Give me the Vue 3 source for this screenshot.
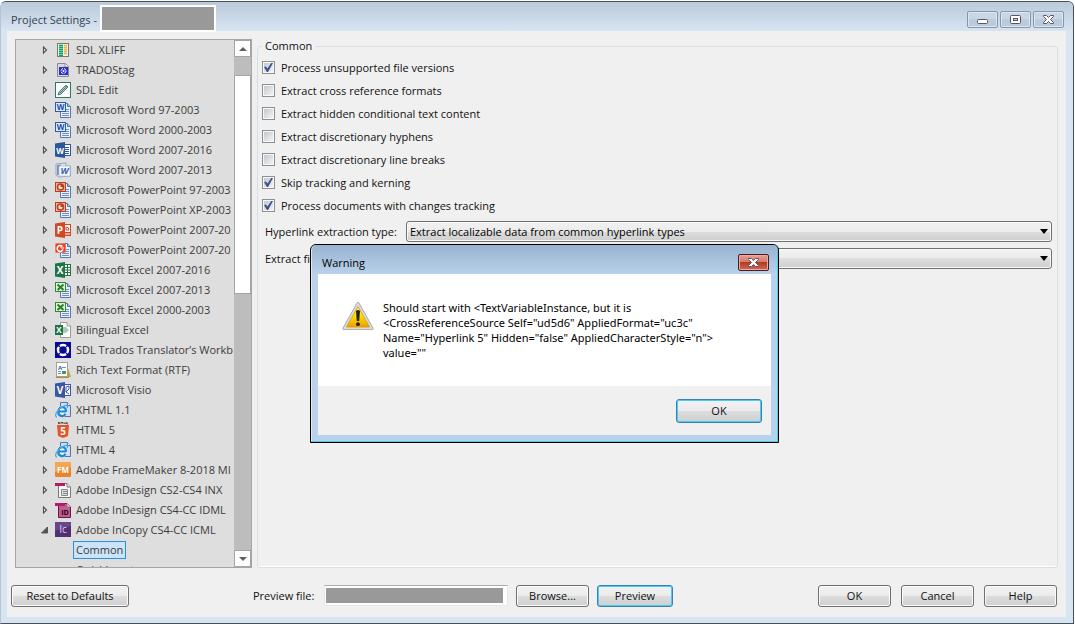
<script setup>
import { ref } from 'vue'

const formats = [
  { label: 'SDL XLIFF', icon: 'xliff' },
  { label: 'TRADOStag', icon: 'trados' },
  { label: 'SDL Edit', icon: 'edit' },
  { label: 'Microsoft Word 97-2003', icon: 'doc', kind: 'word' },
  { label: 'Microsoft Word 2000-2003', icon: 'doc', kind: 'word' },
  { label: 'Microsoft Word 2007-2016', icon: 'office', letter: 'W', color: '#2b579a' },
  { label: 'Microsoft Word 2007-2013', icon: 'word07' },
  { label: 'Microsoft PowerPoint 97-2003', icon: 'doc', kind: 'ppt' },
  { label: 'Microsoft PowerPoint XP-2003', icon: 'doc', kind: 'ppt' },
  { label: 'Microsoft PowerPoint 2007-20', icon: 'office', letter: 'P', color: '#d24726' },
  { label: 'Microsoft PowerPoint 2007-20', icon: 'doc', kind: 'ppt07' },
  { label: 'Microsoft Excel 2007-2016', icon: 'office', letter: 'X', color: '#217346' },
  { label: 'Microsoft Excel 2007-2013', icon: 'doc', kind: 'xls' },
  { label: 'Microsoft Excel 2000-2003', icon: 'doc', kind: 'xls' },
  { label: 'Bilingual Excel', icon: 'bilingual' },
  { label: 'SDL Trados Translator\u2019s Workb', icon: 'workbench' },
  { label: 'Rich Text Format (RTF)', icon: 'rtf' },
  { label: 'Microsoft Visio', icon: 'office', letter: 'V', color: '#3955a3' },
  { label: 'XHTML 1.1', icon: 'ie' },
  { label: 'HTML 5', icon: 'html5' },
  { label: 'HTML 4', icon: 'ie' },
  { label: 'Adobe FrameMaker 8-2018 MI', icon: 'fm' },
  { label: 'Adobe InDesign CS2-CS4 INX', icon: 'inx' },
  { label: 'Adobe InDesign CS4-CC IDML', icon: 'idml' },
  { label: 'Adobe InCopy CS4-CC ICML', icon: 'ic', open: true },
]

const options = ref([
  { label: 'Process unsupported file versions', on: true },
  { label: 'Extract cross reference formats', on: false },
  { label: 'Extract hidden conditional text content', on: false },
  { label: 'Extract discretionary hyphens', on: false },
  { label: 'Extract discretionary line breaks', on: false },
  { label: 'Skip tracking and kerning', on: true },
  { label: 'Process documents with changes tracking', on: true },
])
</script>

<template>
  <div class="page">
    <main class="window">
      <header class="titlebar">
        <h1>Project Settings -</h1>
        <span class="redacted"></span>
        <div class="controls">
          <button type="button" aria-label="Minimize">
            <svg width="13" height="11"><rect x="1.500" y="5.500" width="10" height="4" rx="1" fill="#fff" stroke="#535666" /></svg>
          </button>
          <button type="button" aria-label="Maximize">
            <svg width="13" height="11"><rect x="1.500" y="1.500" width="10" height="8" rx="1" fill="#fff" stroke="#535666" /><rect x="4.500" y="4.500" width="4" height="2" fill="#c3d0de" stroke="#535666" /></svg>
          </button>
          <button type="button" aria-label="Close">
            <svg width="13" height="11"><path d="M1.500 1.500H4.500L6.500 3.500L8.500 1.500H11.500V2.500L8.500 5.500L11.500 8.500V9.500H8.500L6.500 7.500L4.500 9.500H1.500V8.500L4.500 5.500L1.500 2.500Z" fill="#fff" stroke="#535666" /></svg>
          </button>
        </div>
      </header>

      <section class="body">
        <div class="columns">
          <nav class="tree">
            <ul>
              <li v-for="(f, i) in formats" :key="i">
                <svg class="arrow" width="8" height="9">
                  <path v-if="f.open" d="M6.500 1V7H0.500Z" fill="#555" stroke="#555" />
                  <path v-else d="M2.500 1L5.500 4L2.500 7Z" fill="#f4f4f4" stroke="#555" stroke-width="1.200" />
                </svg>
                <svg class="icon" width="16" height="16" viewBox="0 0 16 16">
                  <g v-if="f.icon === 'xliff'">
                    <rect x="2.500" y="1.500" width="11" height="13" fill="#f2f0ea" stroke="#777" />
                    <path d="M4 3.500H8M4 5.500H8M4 7.500H8M4 9.500H8M4 11.500H8M4 13.500H8" stroke="#00a85a" stroke-width="1.400" />
                    <path d="M9 3.500H12M9 5.500H12M9 7.500H12M9 9.500H12M9 11.500H12" stroke="#efb04a" stroke-width="1.400" />
                  </g>
                  <g v-else-if="f.icon === 'trados'">
                    <path d="M2.500 1.500H10.500L13.500 4.500V14.500H2.500Z" fill="#d8d8dc" stroke="#8a8a8a" />
                    <path d="M10 1.500V5H13.500" fill="#fff" stroke="#8a8a8a" />
                    <rect x="4" y="5" width="9" height="8" fill="#2b2fc0" />
                    <circle cx="8.500" cy="9" r="2.500" fill="none" stroke="#fff" stroke-dasharray="3 1" />
                    <circle cx="8.500" cy="9" r="1" fill="#fff" />
                  </g>
                  <g v-else-if="f.icon === 'edit'">
                    <rect x=".5" y=".5" width="15" height="15" fill="#fff" stroke="#2f7768" />
                    <path d="M3 13L4 10L11 3L13 5L6 12Z" fill="#a9c6be" stroke="#2b695c" stroke-width=".8" />
                    <path d="M5 11L12 4" stroke="#2b695c" stroke-width=".7" />
                  </g>
                  <g v-else-if="f.icon === 'doc'">
                    <path d="M5.500 1.500H12.500L15.500 4.500V15.500H5.500Z" fill="#eaf1fc" stroke="#5877ad" />
                    <path d="M12.500 1.500V4.500H15.500" fill="#a7bde2" stroke="#5877ad" />
                    <path d="M7 9.500H14M7 11.500H14M7 13.500H14M11 7.500H14" stroke="#6b8fc9" />
                    <g v-if="f.kind === 'word'">
                      <rect x=".5" y=".5" width="10" height="9" fill="#dfe9fa" stroke="#2b5bb0" />
                      <text x="5.500" y="8" text-anchor="middle" class="glyph" font-size="8" fill="#194ca8">W</text>
                    </g>
                    <g v-else-if="f.kind === 'xls'">
                      <rect x=".5" y=".5" width="10" height="9" fill="#e1f2db" stroke="#348637" />
                      <path d="M2.500 2.500L8.500 8M8.500 2.500L2.500 8" stroke="#25812b" stroke-width="2" />
                    </g>
                    <g v-else-if="f.kind === 'ppt'">
                      <rect x=".5" y=".5" width="10" height="9" fill="#f2b39b" stroke="#b64022" />
                      <circle cx="5.500" cy="5" r="3" fill="#fbe1d5" stroke="#b73e1c" stroke-width="1.500" />
                      <path d="M5.500 5V2A3 3 0 0 1 8.500 5Z" fill="#b73e1c" />
                    </g>
                    <g v-else>
                      <rect x=".5" y="1.500" width="10" height="9" rx="1" fill="#e44528" stroke="#ef7860" />
                      <path d="M7.500 4.500A3 3 0 1 0 8 7.500" fill="none" stroke="#fff" stroke-width="1.500" />
                      <path d="M6 3V6H9" fill="none" stroke="#fff" />
                    </g>
                  </g>
                  <g v-else-if="f.icon === 'office'">
                    <rect x="8" y="2.500" width="7.500" height="11" fill="#fff" :stroke="f.color" />
                    <path v-if="f.letter === 'W'" d="M10 5.500H14M10 7.500H14M10 9.500H14M10 11.500H14" :stroke="f.color" />
                    <path v-else-if="f.letter === 'X'" d="M9 5.500H15M9 8H15M9 10.500H15M12.500 3V13" :stroke="f.color" />
                    <path v-else-if="f.letter === 'P'" d="M10 10.500H15M10 12H15M11 5V8H14A3 3 0 0 0 11 5" fill="none" :stroke="f.color" />
                    <path v-else d="M11 5L14 4V7L11 10L14 12M11 5V10" fill="none" :stroke="f.color" />
                    <path d="M0 1.500L10 0V16L0 14.500Z" :fill="f.color" />
                    <text x="5" y="11.500" text-anchor="middle" class="glyph" :font-size="f.letter === 'W' ? 8 : 10" fill="#fff">{{ f.letter }}</text>
                  </g>
                  <g v-else-if="f.icon === 'word07'">
                    <path d="M1 2L11 1V4H15.500V14L4 15L1 13Z" fill="#dde5f2" stroke="#8fa4cb" />
                    <path d="M2 13V3L6 2.500V4L4 6V13Z" fill="#7991c5" />
                    <rect x="4" y="4" width="11" height="10" rx="1" fill="#f4f7fc" stroke="#b4bfd4" stroke-width=".7" />
                    <text x="9.500" y="12" text-anchor="middle" class="glyph slanted" font-size="9" fill="#3c60b5">W</text>
                  </g>
                  <g v-else-if="f.icon === 'bilingual'">
                    <path d="M5.500 .5H12L15.500 4V15.500H5.500Z" fill="#fff" stroke="#999" />
                    <path d="M12 .5V4H15.500" fill="#eee" stroke="#999" />
                    <path d="M8 5H11L14 8L11 11H8Z" fill="#a5ccb7" />
                    <rect x="0" y="3" width="8" height="10" fill="#217346" />
                    <text x="4" y="11" text-anchor="middle" class="glyph" font-size="8" fill="#fff">X</text>
                  </g>
                  <g v-else-if="f.icon === 'workbench'">
                    <rect width="16" height="16" fill="#090a91" />
                    <circle cx="8" cy="8" r="5" fill="none" stroke="#fff" stroke-width="2.500" />
                    <path d="M3 3L5 5M13 3L11 5M3 13L5 11M13 13L11 11" stroke="#090a91" stroke-width="1.500" />
                  </g>
                  <g v-else-if="f.icon === 'rtf'">
                    <path d="M12 3L16 15H11Z" fill="#c79f42" />
                    <rect x="1.500" y=".5" width="11" height="14" fill="#fff" stroke="#aaa090" />
                    <text x="5" y="7.500" text-anchor="middle" class="glyph" font-size="6" fill="#3059b5">A</text>
                    <path d="M7 5.500H11M3 9.500H6M3 11.500H6" stroke="#6d8fc8" />
                    <rect x="7" y="9" width="4" height="3" fill="#3f9a5c" />
                    <path d="M1 15.500H14" stroke="#b38a3a" />
                  </g>
                  <g v-else-if="f.icon === 'ie'">
                    <path d="M5.500 .5H12.500L15.500 3.500V14.500H5.500Z" fill="#cfdff6" stroke="#5772a9" />
                    <path d="M12.500 .5V3.500H15.500" fill="#fff" stroke="#5772a9" />
                    <circle cx="7" cy="9.500" r="5.500" fill="#e6f4fd" />
                    <path d="M11.500 9.500H3.500A3.700 3.700 0 0 1 11 8.500V9.500M3.500 9.500A3.700 3.700 0 0 0 10.500 11.800" fill="none" stroke="#1f86cf" stroke-width="2.200" />
                    <path d="M2 15C-1 15 1 8 8 4.500C12 2.500 13.500 3.500 12 6" fill="none" stroke="#48ace4" stroke-width="1.300" />
                  </g>
                  <g v-else-if="f.icon === 'html5'">
                    <path d="M3.500 0V2M5 0V2M3.500 1H5M6 .5H8M7 .5V2M9 2V.5L10 1.500L11 .5V2M12 0V2H13" fill="none" stroke="#222" stroke-width=".7" />
                    <path d="M2 3H14L13 14L8 16L3 14Z" fill="#e65527" />
                    <text x="8" y="12.500" text-anchor="middle" class="glyph" font-size="10" fill="#fff">5</text>
                  </g>
                  <g v-else-if="f.icon === 'fm'">
                    <rect width="16" height="15" rx="1" fill="#e8842a" />
                    <path d="M0 0H16V5L0 10Z" fill="#f3a64f" />
                    <text x="8" y="11" text-anchor="middle" class="glyph" font-size="8" fill="#fff">FM</text>
                  </g>
                  <g v-else-if="f.icon === 'inx' || f.icon === 'idml'">
                    <path d="M3.500 1.500H12L15.500 5V15.500H3.500Z" :fill="f.icon === 'inx' ? '#f6f6f6' : '#c35a91'" :stroke="f.icon === 'inx' ? '#777' : '#641b43'" />
                    <path d="M12 1.500V5H15.500" fill="#f4e5ed" stroke="#777" />
                    <rect x="0" y="1" width="10" height="3" fill="#b41b68" />
                    <path v-if="f.icon === 'inx'" d="M6.500 7.500H12.500V13.500H6.500ZM8 9.500H12M8 11.500H12" fill="#ddd" stroke="#888" />
                    <text v-else x="10" y="13" text-anchor="middle" class="glyph" font-size="7" fill="#220915">ID</text>
                  </g>
                  <g v-else>
                    <rect width="16" height="15" fill="#503070" />
                    <path d="M0 0H16V4L0 9Z" fill="#69458a" />
                    <text x="8" y="11" text-anchor="middle" class="glyph thin" font-size="10" fill="#e0c7f0">Ic</text>
                  </g>
                </svg>
                <span class="name">{{ f.label }}</span>
              </li>
              <li class="child"><a href="#common" class="current">Common</a></li>
              <li class="child"><a href="#quick">QuickInsert</a></li>
            </ul>
            <div class="scrollbar">
              <button type="button" aria-label="Scroll up"><svg width="8" height="4"><path d="M4 0L8 4H0Z" fill="#606060" /></svg></button>
              <div class="track"><div class="thumb"></div></div>
              <button type="button" aria-label="Scroll down"><svg width="8" height="4"><path d="M0 0H8L4 4Z" fill="#606060" /></svg></button>
            </div>
          </nav>

          <fieldset class="group">
            <legend>Common</legend>
            <label v-for="o in options" :key="o.label" class="check">
              <input v-model="o.on" type="checkbox" />{{ o.label }}
            </label>
            <div class="fields">
              <div class="field">
                <label for="links">Hyperlink extraction type:</label>
                <span class="combo">
                  <select id="links"><option>Extract localizable data from common hyperlink types</option></select>
                  <svg width="8" height="5"><path d="M0 0H8L4 5Z" fill="#000" /></svg>
                </span>
              </div>
              <div class="field">
                <label for="files">Extract files:</label>
                <span class="combo">
                  <select id="files"><option></option></select>
                  <svg width="8" height="5"><path d="M0 0H8L4 5Z" fill="#000" /></svg>
                </span>
              </div>
            </div>
          </fieldset>
        </div>

        <footer class="footer">
          <div class="reset"><button type="button" class="btn">Reset to Defaults</button></div>
          <label for="preview">Preview file:</label>
          <input id="preview" type="text" class="path" />
          <button type="button" class="btn">Browse...</button>
          <button type="button" class="btn focus preview">Preview</button>
          <div class="actions">
            <button type="button" class="btn">OK</button>
            <button type="button" class="btn">Cancel</button>
            <button type="button" class="btn">Help</button>
          </div>
        </footer>
      </section>
    </main>

    <section class="dialog" role="alertdialog" aria-labelledby="warn-title">
      <header>
        <h2 id="warn-title">Warning</h2>
        <button type="button" class="close" aria-label="Close warning">
          <svg width="13" height="11"><path d="M1.500 1.500H4.500L6.500 3.500L8.500 1.500H11.500V2.500L8.500 5.500L11.500 8.500V9.500H8.500L6.500 7.500L4.500 9.500H1.500V8.500L4.500 5.500L1.500 2.500Z" fill="#fff" stroke="#5b5566" /></svg>
        </button>
      </header>
      <div class="message">
        <svg width="32" height="32" viewBox="0 0 32 32">
          <defs>
            <linearGradient id="amber" x1="0" y1="0" x2="0" y2="1"><stop offset="0" stop-color="#fff36a" /><stop offset=".45" stop-color="#ffe100" /><stop offset="1" stop-color="#f39c00" /></linearGradient>
          </defs>
          <path d="M16 3.500L30 28.500H2Z" fill="#b9bcc0" stroke="#a2a5a9" stroke-width="3" stroke-linejoin="round" />
          <path d="M16 3.500L30 28.500H2Z" fill="#d9dbdd" stroke="#d9dbdd" stroke-width="1.500" stroke-linejoin="round" />
          <path d="M16 6.500L27.500 27H4.500Z" fill="url(#amber)" stroke="#d79a00" stroke-width=".8" stroke-linejoin="round" />
          <path d="M14 11Q16 9 18 11L17.200 21H14.800Z" fill="#222" />
          <circle cx="16" cy="24.200" r="1.900" fill="#222" />
        </svg>
        <p>
          Should start with &lt;TextVariableInstance, but it is<br />
          &lt;CrossReferenceSource Self="ud5d6" AppliedFormat="uc3c"<br />
          Name="Hyperlink 5" Hidden="false" AppliedCharacterStyle="n"&gt;<br />
          value=""
        </p>
      </div>
      <div class="answer"><button type="button" class="btn focus">OK</button></div>
    </section>
  </div>
</template>

<style>
body {
  margin: 0;
  background: #fff;
}
</style>

<style scoped>
* {
  box-sizing: border-box;
}
.page {
  position: relative;
  height: 100vh;
  padding: 1px 1px 3px 0;
  font: 11px/16px "Open Sans", "Noto Sans", sans-serif;
  color: #111;
}
button,
input,
select {
  font: inherit;
  color: inherit;
  margin: 0;
}
svg {
  display: block;
  flex: none;
}
h1,
h2,
p,
ul {
  margin: 0;
  padding: 0;
  font: inherit;
  list-style: none;
}
.window {
  height: 100%;
  display: flex;
  flex-direction: column;
  border: 1px solid #4b4f56;
  border-left-color: #b9c4d0;
  border-radius: 6px 6px 0 0;
  background: #d7e4f2;
  padding: 0 7px 6px 6px;
}
.titlebar {
  display: flex;
  align-items: center;
  height: 29px;
  margin: 0 -7px 0 -6px;
  padding: 0 9px 0 10px;
  border-radius: 5px 5px 0 0;
  background: linear-gradient(#b9cada, #d7e4f2);
}
h1 {
  width: 89px;
  font-size: 11px;
  padding-top: 6px;
  color: #39424c;
  white-space: nowrap;
}
.redacted {
  position: relative;
  width: 116px;
  height: 27px;
  margin-top: 4px;
  border: 2px solid #fff;
  background: #999;
}
.controls {
  display: flex;
  gap: 2px;
  margin-left: auto;
  padding-top: 6px;
}
.controls button {
  width: 31px;
  height: 17px;
  padding: 0;
  display: flex;
  align-items: center;
  justify-content: center;
  border: 1px solid #8796ab;
  border-radius: 2px;
  background: linear-gradient(#c9d7e5 50%, #bccbdc 50%);
  box-shadow: inset 0 0 0 1px #dce6f0;
}
.body {
  flex: 1;
  min-height: 0;
  display: flex;
  flex-direction: column;
  background: #f0f0f0;
  padding: 8px 8px 10px 4px;
}
.columns {
  flex: 1;
  min-height: 0;
  display: flex;
  gap: 5px;
  padding-left: 4px;
}
.tree {
  width: 237px;
  flex: none;
  display: flex;
  border: 1px solid #a5a5a5;
  background: #dedede;
}
.tree ul {
  flex: 1;
  min-width: 0;
  overflow: hidden;
}
.tree li {
  display: flex;
  align-items: center;
  height: 20px;
  padding-left: 25px;
  color: #3c3c3c;
  white-space: nowrap;
}
.arrow {
  margin-right: 6px;
}
.icon {
  margin-right: 5px;
}
.glyph {
  font-family: "Open Sans", sans-serif;
  font-weight: 700;
}
.thin {
  font-weight: 400;
}
.slanted {
  font-style: italic;
}
.tree .child {
  padding-left: 57px;
}
.child a {
  border: 1px solid transparent;
  padding: 0 2px;
  color: #3c3c3c;
  text-decoration: none;
}
.child .current {
  border-color: #2f8fd8;
  background: #cbe4f8;
}
.scrollbar {
  width: 17px;
  display: flex;
  flex-direction: column;
  background: #bdbdbd;
}
.scrollbar button {
  height: 17px;
  padding: 0;
  display: flex;
  align-items: center;
  justify-content: center;
  border: 1px solid #a5a5a5;
  background: #fff;
}
.track {
  flex: 1;
  padding-top: 18px;
}
.thumb {
  height: 46%;
  border: 1px solid #a5a5a5;
  background: #fff;
}
.group {
  flex: 1;
  min-width: 0;
  margin: 0;
  padding: 3px 5px 0 4px;
  border: 1px solid #d5dfe5;
  border-radius: 3px;
  box-shadow: inset 0 -1px #fff;
}
legend {
  padding: 0 3px;
  line-height: 14px;
}
.check {
  display: flex;
  align-items: center;
  gap: 6px;
  height: 23px;
}
.check input {
  appearance: none;
  width: 13px;
  height: 13px;
  padding: 1px;
  border: 1px solid #8e8f8f;
  background: linear-gradient(135deg, #c3c8d0, #f3f3f3) content-box, #f8f8f8;
}
.check input:checked::before {
  content: "";
  display: block;
  width: 9px;
  height: 9px;
  background: #3c5394;
  clip-path: polygon(0 45%, 22% 40%, 38% 62%, 80% 0, 100% 0, 45% 100%, 32% 100%);
}
.fields {
  padding-top: 1px;
}
.field {
  display: flex;
  align-items: center;
  height: 27px;
}
.field > label {
  width: 144px;
  padding-left: 3px;
  flex: none;
  white-space: nowrap;
}
.combo {
  flex: 1;
  display: grid;
  align-items: center;
}
.combo > * {
  grid-area: 1 / 1;
}
.combo svg {
  justify-self: end;
  margin-right: 4px;
  pointer-events: none;
}
select {
  appearance: none;
  width: 100%;
  height: 21px;
  padding: 0 20px 0 3px;
  border: 1px solid #707070;
  border-radius: 3px;
  color: #000;
  background: linear-gradient(#f2f2f2, #ebebeb 50%, #dddddd 50%, #cfcfcf);
  box-shadow: inset 0 0 0 1px #fafafa;
}
.footer {
  display: flex;
  align-items: center;
  height: 23px;
  margin-top: 16px;
  padding-right: 1px;
}
.reset {
  width: 242px;
}
.reset .btn {
  width: 118px;
}
.btn {
  width: 73px;
  height: 22px;
  padding: 0;
  border: 1px solid #707070;
  border-radius: 3px;
  background: linear-gradient(#f2f2f2, #ebebeb 50%, #dddddd 50%, #cfcfcf);
  box-shadow: inset 0 0 0 1px #fafafa;
}
.btn.focus {
  border-color: #3c7fb1;
  box-shadow: inset 0 0 0 1px #46cdf5;
}
.footer > label {
  width: 71px;
}
.path {
  width: 184px;
  height: 21px;
  margin-right: 8px;
  padding: 2px 4px 2px 1px;
  border: 1px solid #e3e9ef;
  border-top-color: #abadb3;
  background: linear-gradient(#999, #999) content-box, #fff;
}
.preview {
  width: 76px;
  margin-left: 8px;
}
.actions {
  display: flex;
  gap: 10px;
  margin-left: auto;
}
.dialog {
  position: absolute;
  top: 244px;
  left: 310px;
  width: 469px;
  padding: 0 7px 7px;
  border: 1px solid #000;
  border-radius: 6px 6px 0 0;
  background: #b9d1ea;
  box-shadow: inset -1px -1px #45cfe6, inset 1px 1px #dcebf7;
}
.dialog header {
  display: flex;
  align-items: center;
  justify-content: space-between;
  height: 29px;
  margin: 0 -6px;
  padding: 6px 8px 0 10px;
  border-radius: 5px 5px 0 0;
  background: linear-gradient(#98b3d0, #b9d1ea);
  color: #000;
}
h2 {
  font-size: 11px;
}
.close {
  width: 31px;
  height: 17px;
  padding: 0;
  display: flex;
  align-items: center;
  justify-content: center;
  border: 1px solid #4d1a24;
  border-radius: 2px;
  background: linear-gradient(#e5a094, #d6796a 48%, #b53a24 50%, #cf6a4f);
  box-shadow: inset 0 0 0 1px #e8aca0;
}
.message {
  display: flex;
  align-items: flex-start;
  gap: 9px;
  min-height: 112px;
  padding: 26px 20px 20px 24px;
  background: #fff;
  color: #000;
}
.message p {
  font-family: "Noto Sans", sans-serif;
  line-height: 15px;
  white-space: nowrap;
}
.answer {
  display: flex;
  justify-content: flex-end;
  padding: 13px 9px 12px;
  background: #f0f0f0;
}
.answer .btn {
  width: 86px;
  height: 24px;
}
</style>
